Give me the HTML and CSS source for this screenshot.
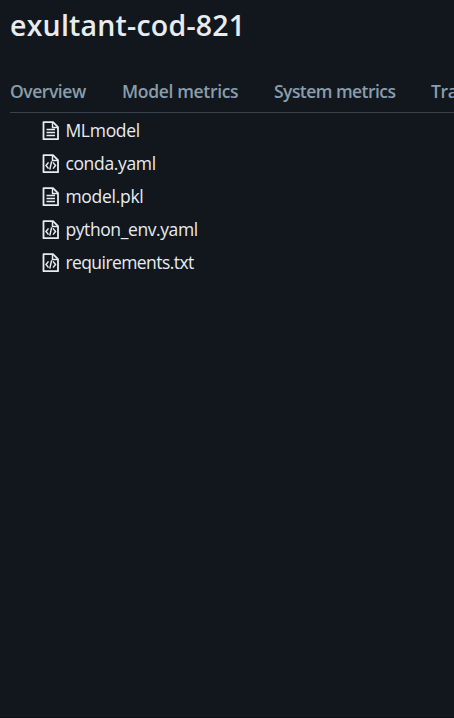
FILE: index.html
```html
<!DOCTYPE html>
<html lang="en">
<head>
<meta charset="utf-8">
<title>exultant-cod-821</title>
<link rel="stylesheet" href="styles.css">
</head>
<body>
<svg class="defs" aria-hidden="true">
  <symbol id="doc" viewBox="0 0 17 19">
    <path d="M1.5 1.2h9.5l5 5v12H1.5z" fill="none" stroke="currentColor" stroke-width="1.8" stroke-linejoin="round"/>
    <path d="M10.5 1v5.5H16M4.5 8.5h8.5M4.5 11.5h8.5M4.5 14.5h8.5" fill="none" stroke="currentColor" stroke-width="1.4"/>
  </symbol>
  <symbol id="code" viewBox="0 0 17 19">
    <path d="M1.5 1.2h9.5l5 5v12H1.5z" fill="none" stroke="currentColor" stroke-width="1.8" stroke-linejoin="round"/>
    <path d="M10.5 1v5.5H16M6.5 8.4L4 11.5l2.5 3.1M11 8.4l2.5 3.1-2.5 3.1M9.6 7.4l-1.8 8.2" fill="none" stroke="currentColor" stroke-width="1.5"/>
  </symbol>
</svg>
<main class="page">
  <h1 class="title">exultant-cod-821</h1>
  <nav class="tabs">
    <a class="tab overview">Overview</a>
    <a class="tab model">Model metrics</a>
    <a class="tab system">System metrics</a>
    <a class="tab traces">Traces</a>
  </nav>
  <ul class="files">
    <li class="file"><svg class="icon"><use href="#doc"/></svg><span>MLmodel</span></li>
    <li class="file"><svg class="icon"><use href="#code"/></svg><span class="conda">conda.yaml</span></li>
    <li class="file"><svg class="icon"><use href="#doc"/></svg><span>model.pkl</span></li>
    <li class="file"><svg class="icon"><use href="#code"/></svg><span class="env">python_env.yaml</span></li>
    <li class="file"><svg class="icon"><use href="#code"/></svg><span class="requirements">requirements.txt</span></li>
  </ul>
</main>
</body>
</html>
```
FILE: styles.css
```css
* { box-sizing: border-box; }
body { margin: 0; overflow: hidden; background: #11171d; color: #e8ecf0; font-family: "Open Sans", "Noto Sans", sans-serif; }
.defs { display: none; }
.page { height: 718px; padding-left: 10px; border-bottom: 1px solid #0c0e13; overflow: hidden; }
.title { margin: 0; height: 71px; padding-top: 6px; font-size: 28.5px; line-height: 38px; font-weight: 600; letter-spacing: .22px; white-space: nowrap; }
.tabs { display: flex; gap: 36px; height: 42px; border-bottom: 1px solid #37444f; color: #8a9dac; font-size: 17.5px; line-height: 41px; font-weight: 600; white-space: nowrap; }
.tab { flex: none; }
.overview { width: 76px; letter-spacing: -.45px; }
.model { width: 116px; letter-spacing: -.33px; }
.system { width: 121px; letter-spacing: -.55px; }
.traces { letter-spacing: -.4px; }
.files { margin: 0; padding: 1px 0 0 32px; list-style: none; font-size: 17.5px; line-height: 22px; letter-spacing: -.28px; }
.file { display: flex; align-items: center; gap: 6.4px; height: 33px; white-space: nowrap; }
.file span { margin-top: -2px; }
.icon { width: 17px; height: 19px; flex: none; }
.conda { letter-spacing: -.34px; }
.env { letter-spacing: -.4px; }
.requirements { letter-spacing: -.57px; }
```
